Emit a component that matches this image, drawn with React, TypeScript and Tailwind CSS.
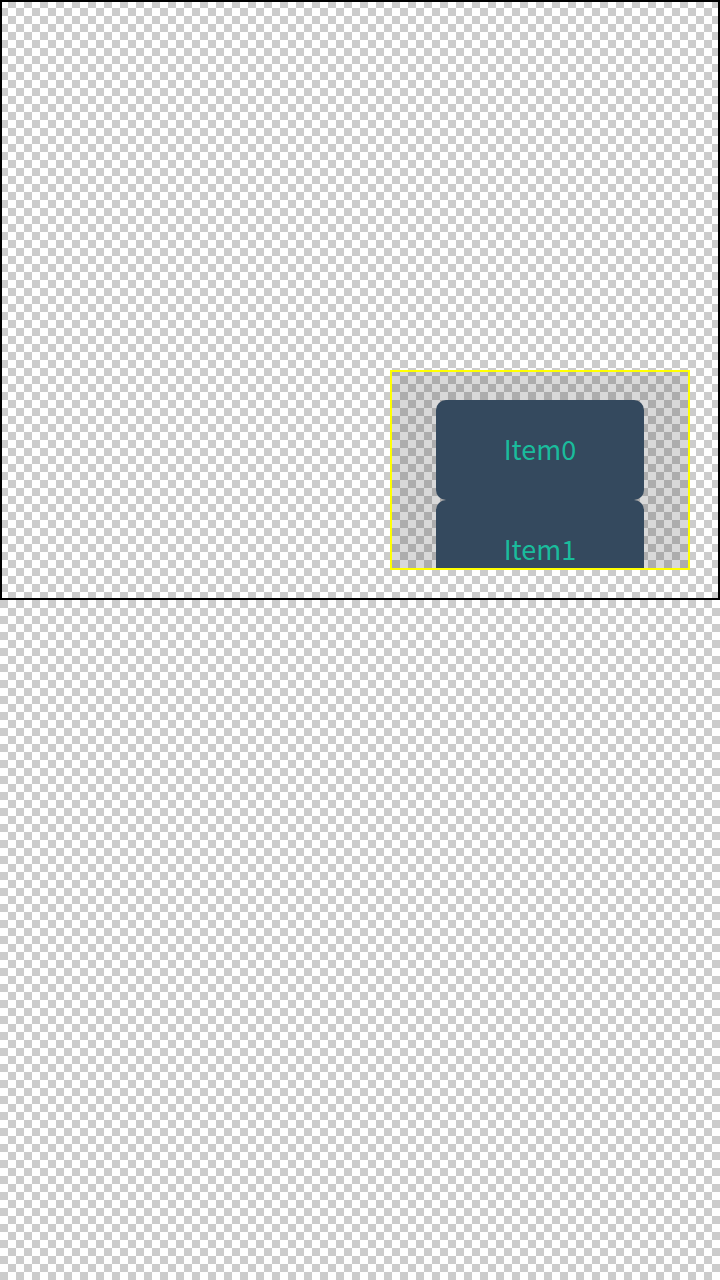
import React from 'react';

const items = ['Item0', 'Item1'];

export default function App() {
  return (
    <div className="min-h-screen w-full bg-[repeating-conic-gradient(#cccccc_0_25%,#ffffff_0_50%)] bg-size-[16px_16px] font-['Noto_Sans_CJK_SC',sans-serif]">
      {/* Stage */}
      <div className="w-[720px] h-[600px] border-2 border-black flex items-end justify-end p-[28px]">
        {/* Scroll viewport */}
        <div className="w-[300px] h-[200px] border-2 border-[#ffff00] bg-black/15 overflow-hidden">
          <div className="flex flex-col items-center pt-[28px]">
            {items.map((item) => (
              <div
                key={item}
                className="w-[208px] h-[100px] shrink-0 rounded-[10px] bg-[#34495e] text-[#1abc9c] text-[27px] leading-none pb-[4px] flex items-center justify-center"
              >
                {item}
              </div>
            ))}
          </div>
        </div>
      </div>
    </div>
  );
}
